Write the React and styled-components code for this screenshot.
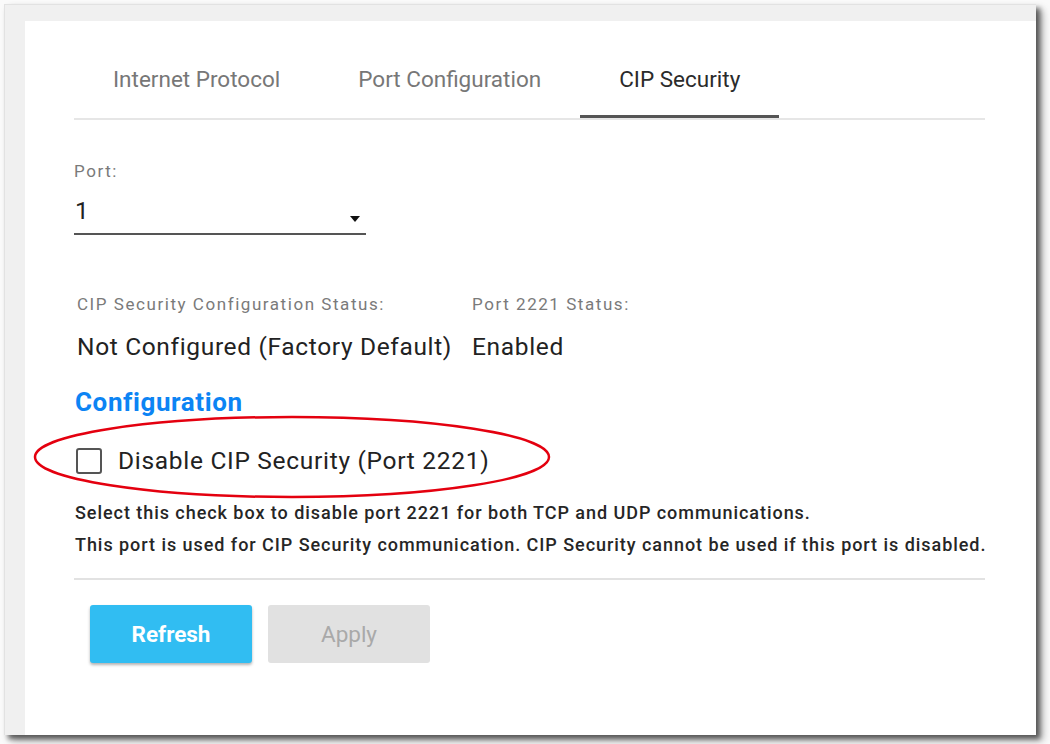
import React, { useState } from 'react';
import styled, { createGlobalStyle } from 'styled-components';

const GlobalStyle = createGlobalStyle`
  html, body {
    margin: 0;
    padding: 0;
    background: #ffffff;
    font-family: Roboto, "Liberation Sans", Arial, sans-serif;
  }
`;

const Screen = styled.div`
  width: 1050px;
  height: 744px;
  box-sizing: border-box;
  padding: 4px 14px 9px 4px;
  background: #fafafa;
`;

const Frame = styled.div`
  height: 100%;
  box-sizing: border-box;
  padding: 16px 0 0 20px;
  background: #f0f0f0;
  border-top: 1px solid #e2e2e2;
  border-left: 1px solid #e2e2e2;
  box-shadow: 4px 4px 5px rgba(0, 0, 0, 0.55), 7px 6px 8px rgba(0, 0, 0, 0.25);
`;

const Panel = styled.div`
  position: relative;
  height: 100%;
  box-sizing: border-box;
  background: #ffffff;
  padding: 45px 51px 0 49px;
`;

const Tabs = styled.div`
  display: flex;
  border-bottom: 2px solid #e6e6e6;
`;

const Tab = styled.button`
  border: none;
  background: none;
  margin: 0;
  padding: 0 39px 22px;
  font-family: inherit;
  font-size: 22.5px;
  line-height: 27px;
  color: ${(p) => (p.$active ? '#2b2b2b' : '#777777')};
  border-bottom: 3px solid ${(p) => (p.$active ? '#555555' : 'transparent')};
  cursor: pointer;
`;

const Field = styled.div`
  margin-top: 41px;
`;

const FieldLabel = styled.div`
  font-size: 17px;
  line-height: 20px;
  color: #7a7a7a;
  letter-spacing: 1.55px;
`;

const Select = styled.div`
  width: 292px;
  height: 39px;
  margin-top: 15px;
  box-sizing: border-box;
  display: flex;
  align-items: flex-start;
  justify-content: space-between;
  border-bottom: 2px solid #555555;
  font-size: 24.5px;
  line-height: 30px;
  color: #222222;
  padding-left: 1px;
  padding-right: 6px;
`;

const Caret = styled.span`
  width: 0;
  height: 0;
  margin-top: 20px;
  border-left: 5px solid transparent;
  border-right: 5px solid transparent;
  border-top: 6px solid #111111;
`;

const StatusGrid = styled.div`
  display: inline-grid;
  grid-template-columns: auto auto;
  column-gap: 20px;
  row-gap: 18px;
  margin-top: 59px;
  padding-left: 3px;
`;

const StatusLabel = styled(FieldLabel)``;

const StatusValue = styled.div`
  font-size: 24.5px;
  line-height: 30px;
  color: #222222;
  letter-spacing: 0.65px;
`;

const SectionTitle = styled.h2`
  margin: 24px 0 0 1px;
  font-size: 26px;
  line-height: 32px;
  font-weight: 700;
  letter-spacing: 0.6px;
  color: #0c84f4;
`;

const CheckRow = styled.label`
  position: relative;
  display: flex;
  align-items: center;
  gap: 16px;
  height: 30px;
  margin-top: 28px;
  padding-left: 2px;
  font-size: 24.5px;
  line-height: 30px;
  color: #222222;
  letter-spacing: 0.7px;
  cursor: pointer;
`;

const Box = styled.span`
  width: 26px;
  height: 26px;
  flex: none;
  box-sizing: border-box;
  border: 2px solid #555555;
  border-radius: 3px;
  background: ${(p) => (p.$checked ? '#555555' : '#ffffff')};
`;

const Highlight = styled.svg`
  position: absolute;
  left: -41px;
  top: -31px;
  width: 518px;
  height: 84px;
  pointer-events: none;
  overflow: visible;
`;

const Help = styled.div`
  margin-top: 21px;
  padding-left: 1px;
  font-size: 18px;
  line-height: 32px;
  font-weight: 500;
  color: #262626;
  letter-spacing: 0.95px;
  white-space: nowrap;
`;

const Divider = styled.div`
  margin-top: 17px;
  border-top: 2px solid #e2e2e2;
`;

const Actions = styled.div`
  display: flex;
  gap: 16px;
  margin-top: 25px;
  padding-left: 16px;
`;

const ActionButton = styled.button`
  width: 162px;
  height: 58px;
  border: none;
  border-radius: 3px;
  font-family: inherit;
  font-size: 22.5px;
  font-weight: ${(p) => (p.$primary ? 700 : 400)};
  color: ${(p) => (p.$primary ? '#ffffff' : '#a9a9a9')};
  background: ${(p) => (p.$primary ? '#31bdf2' : '#e1e1e1')};
  box-shadow: ${(p) => (p.$primary ? '0 2px 3px rgba(0, 0, 0, 0.3)' : 'none')};
  cursor: ${(p) => (p.$primary ? 'pointer' : 'default')};
`;

const tabs = ['Internet Protocol', 'Port Configuration', 'CIP Security'];

const App = () => {
  const [activeTab, setActiveTab] = useState(2);
  const [disabled, setDisabled] = useState(false);

  return (
    <Screen>
      <GlobalStyle />
      <Frame>
        <Panel>
          <Tabs>
            {tabs.map((t, i) => (
              <Tab key={t} $active={i === activeTab} onClick={() => setActiveTab(i)}>
                {t}
              </Tab>
            ))}
          </Tabs>

          <Field>
            <FieldLabel>Port:</FieldLabel>
            <Select>
              <span>1</span>
              <Caret />
            </Select>
          </Field>

          <div>
            <StatusGrid>
              <StatusLabel>CIP Security Configuration Status:</StatusLabel>
              <StatusLabel>Port 2221 Status:</StatusLabel>
              <StatusValue>Not Configured (Factory Default)</StatusValue>
              <StatusValue>Enabled</StatusValue>
            </StatusGrid>
          </div>

          <SectionTitle>Configuration</SectionTitle>

          <CheckRow onClick={() => setDisabled(!disabled)}>
            <Box $checked={disabled} />
            Disable CIP Security (Port 2221)
            {/* 강조 표시용 빨간 타원 */}
            <Highlight viewBox="0 0 518 84">
              <ellipse cx="259" cy="42" rx="257" ry="40" fill="none" stroke="#e4000f" strokeWidth="2.5" />
            </Highlight>
          </CheckRow>

          <Help>
            Select this check box to disable port 2221 for both TCP and UDP communications.
            <br />
            This port is used for CIP Security communication. CIP Security cannot be used if this port is disabled.
          </Help>

          <Divider />

          <Actions>
            <ActionButton $primary>Refresh</ActionButton>
            <ActionButton disabled>Apply</ActionButton>
          </Actions>
        </Panel>
      </Frame>
    </Screen>
  );
};

export default App;
